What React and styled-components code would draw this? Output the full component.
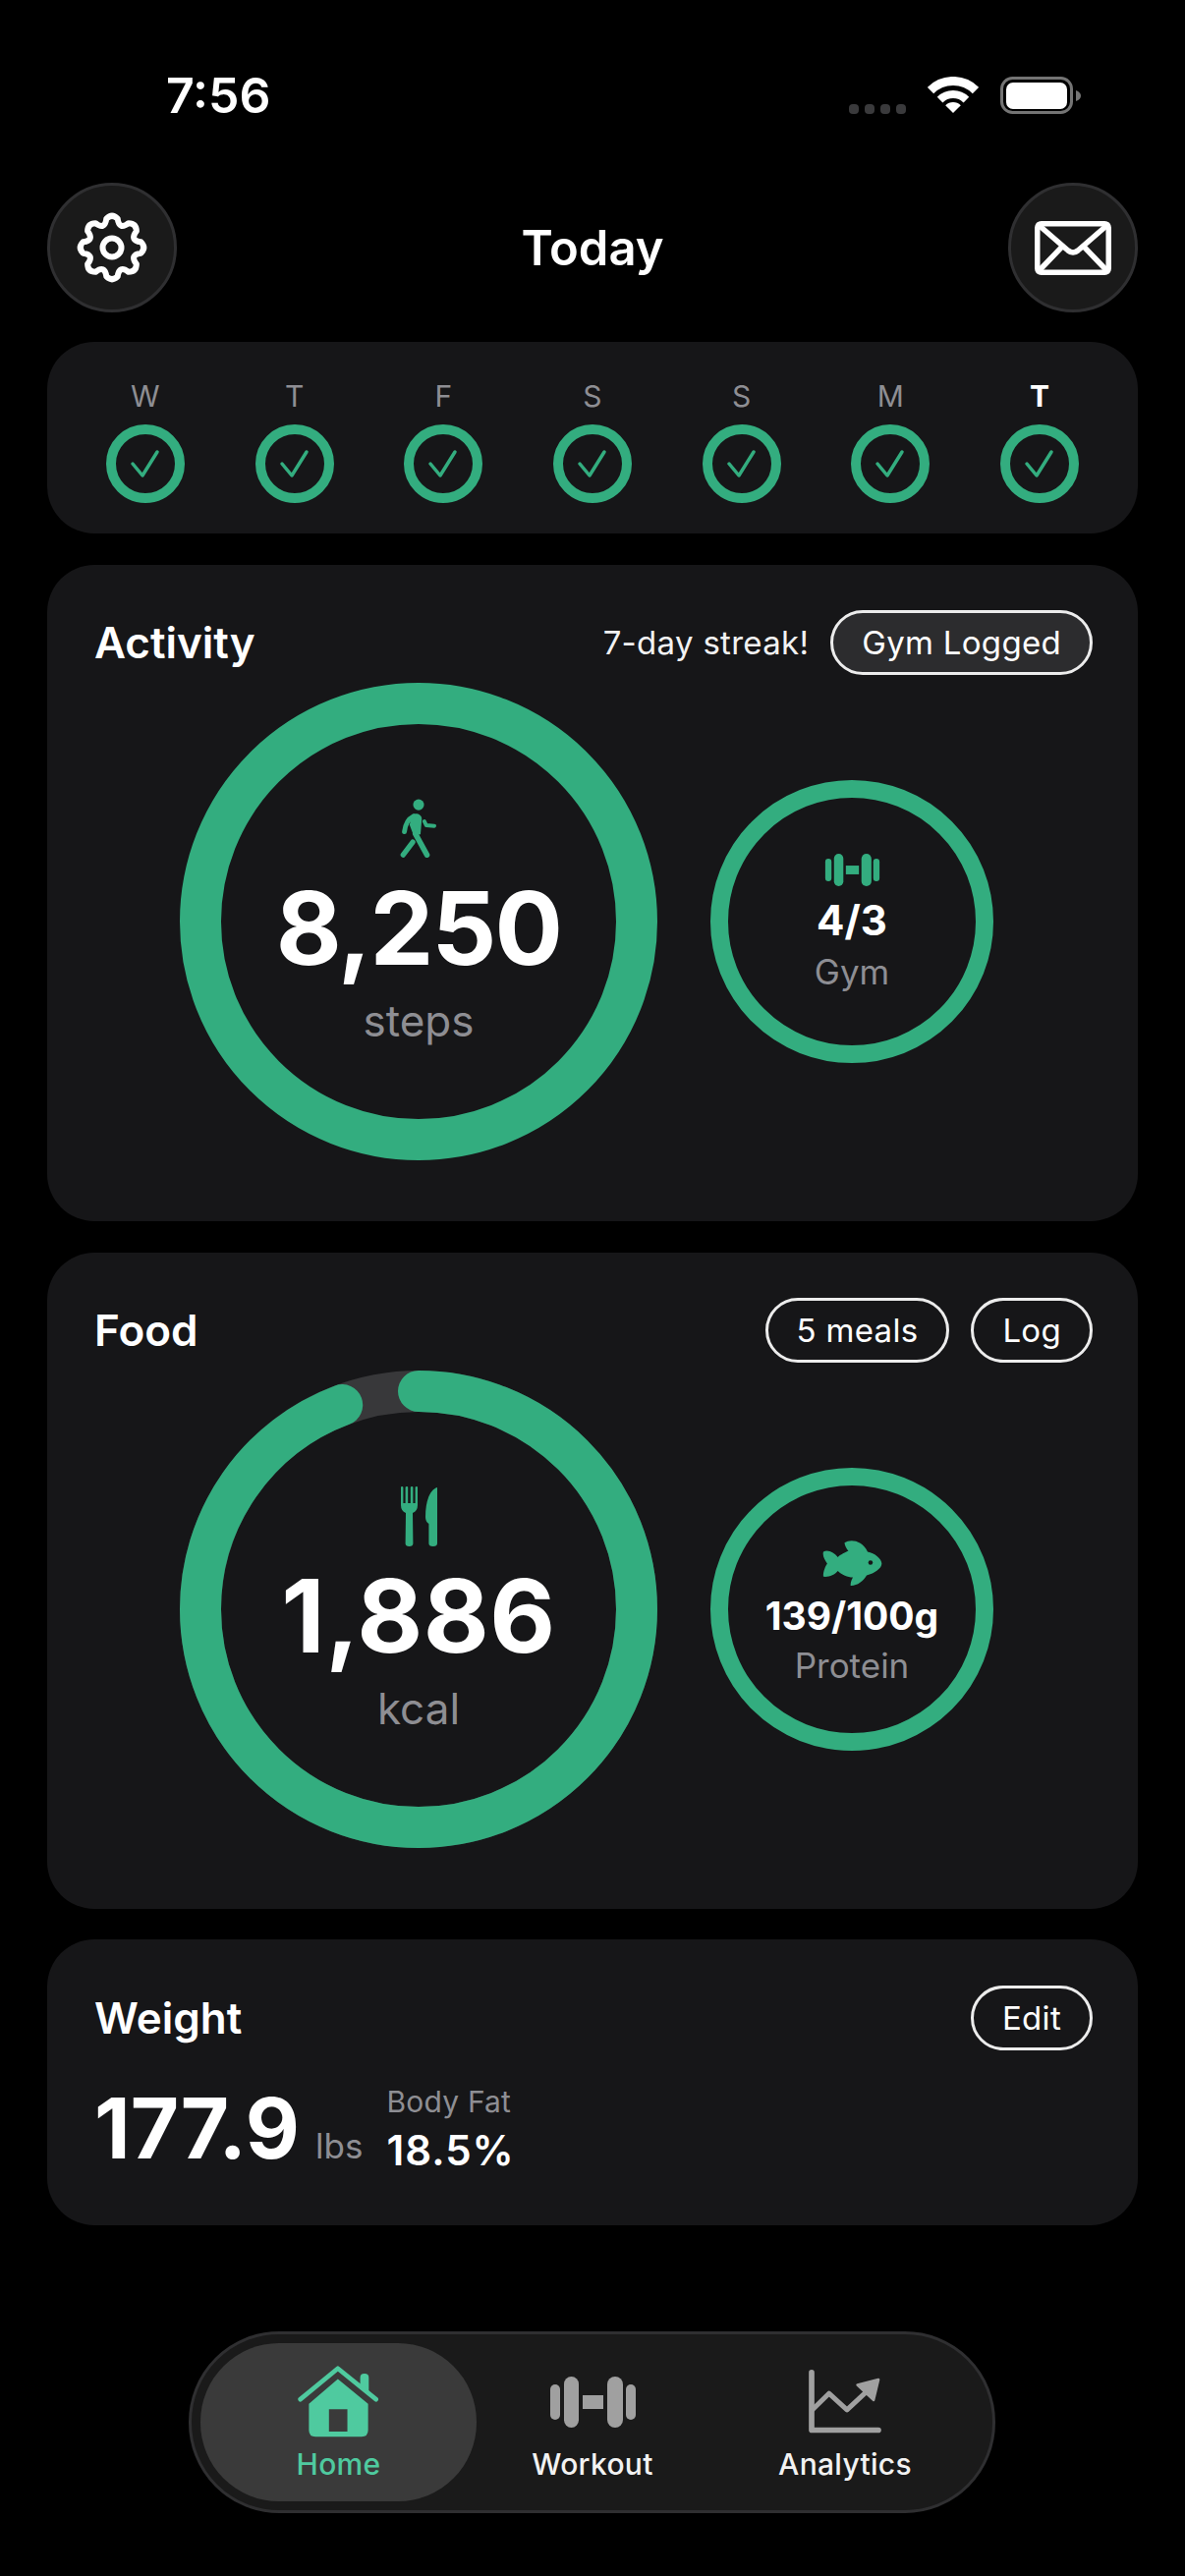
import React from 'react';
import styled, { createGlobalStyle } from 'styled-components';

const GREEN = '#33ad7f';
const MINT = '#4fca9f';
const CARD = '#161618';
const GREY = '#8e8e93';

const days = [
  { label: 'W' },
  { label: 'T' },
  { label: 'F' },
  { label: 'S' },
  { label: 'S' },
  { label: 'M' },
  { label: 'T', today: true },
];

// 8 soft teeth, stroked
const gearPath = (() => {
  const pt = (deg, r) => {
    const a = ((deg - 90) * Math.PI) / 180;
    return `${(40 + r * Math.cos(a)).toFixed(2)} ${(40 + r * Math.sin(a)).toFixed(2)}`;
  };
  let d = `M${pt(-11, 30)}`;
  for (let i = 0; i < 8; i++) {
    const c = i * 45;
    d += ` Q${pt(c, 35)} ${pt(c + 11, 30)}`;
    d += ` Q${pt(c + 22.5, 19)} ${pt(c + 34, 30)}`;
  }
  return d + 'Z';
})();

const GearIcon = () => (
  <svg width="80" height="80" viewBox="0 0 80 80" fill="none" stroke="#fff" strokeWidth="6" strokeLinejoin="round">
    <path d={gearPath} />
    <circle cx="40" cy="40" r="9.5" />
  </svg>
);

const MailIcon = () => (
  <svg width="78" height="55" viewBox="0 0 78 55" fill="none" stroke="#fff" strokeWidth="5.5" strokeLinecap="round" strokeLinejoin="round">
    <rect x="2.75" y="2.75" width="72.5" height="49.5" rx="4" />
    <path d="M4 4 L34 30 Q39 34 44 30 L74 4" />
    <path d="M4 51 L28 26 M74 51 L50 26" />
  </svg>
);

const WifiIcon = () => (
  <svg width="52" height="38" viewBox="-26 -37 52 38" fill="none" stroke="#fff">
    <path d="M-23 -23 A32.5 32.5 0 0 1 23 -23" strokeWidth="9" />
    <path d="M-13.4 -13.4 A19 19 0 0 1 13.4 -13.4" strokeWidth="8" />
    <path d="M0 0 L-7.8 -7.8 A11 11 0 0 1 7.8 -7.8 Z" fill="#fff" stroke="none" />
  </svg>
);

const BatteryIcon = () => (
  <svg width="82" height="38" viewBox="0 0 82 38" fill="none">
    <rect x="1.5" y="1.5" width="71" height="35" rx="11" stroke="#747474" strokeWidth="3" />
    <rect x="6" y="6" width="62" height="27" rx="7" fill="#fff" />
    <path d="M77 14 Q82 16 82 19.5 Q82 23 77 25 Z" fill="#747474" />
  </svg>
);

const WalkIcon = () => (
  <svg width="38" height="60" viewBox="108 38 116 182" fill={GREEN} stroke={GREEN} strokeLinecap="round" strokeLinejoin="round">
    <circle cx="166" cy="56" r="17" stroke="none" />
    <path d="M146 86 C160 80 176 86 176 100 L172 148 L150 150 L138 118 Z" stroke="none" />
    <path d="M150 92 C134 100 125 112 122 140" fill="none" strokeWidth="15" />
    <path d="M156 146 L192 212" fill="none" strokeWidth="17" />
    <path d="M148 172 L118 212" fill="none" strokeWidth="16" />
    <path d="M184 108 L190 120 L215 122" fill="none" strokeWidth="12" />
  </svg>
);

const Dumbbell = ({ width, height, color }) => (
  <svg width={width} height={height} viewBox="0 0 87 52" fill={color}>
    <rect x="0" y="8" width="10" height="36" rx="5" />
    <rect x="14" y="0" width="15" height="52" rx="7.5" />
    <rect x="33" y="19" width="21" height="14" />
    <rect x="58" y="0" width="16" height="52" rx="8" />
    <rect x="77" y="8" width="10" height="36" rx="5" />
  </svg>
);

const CutleryIcon = () => (
  <svg width="37" height="61" viewBox="0 0 37 61" fill={GREEN}>
    <path d="M0 1 Q0 0 1 0 Q2.4 0 2.4 1 V17 H4.6 V1 Q4.6 0 6 0 Q7.4 0 7.2 1 V17 H9.8 V1 Q9.8 0 11.2 0 Q12.4 0 12.4 1 V17 H14.6 V1 Q14.6 0 16 0 Q17 0 17 1 V19 Q17 25 12 27 L12.4 58 Q12.4 61 8.5 61 Q4.6 61 4.6 58 L5 27 Q0 25 0 19 Z" />
    <path d="M37 1 C30 3 25 14 25 31 Q25 36 28.4 38 L28.4 58 Q28.4 61 32.7 61 Q37 61 37 58 Z" />
  </svg>
);

const FishIcon = () => (
  <svg width="61" height="48" viewBox="167 80 187 147">
    <path
      fill={GREEN}
      d="M170 118 C185 110 205 122 215 135 C222 128 240 118 248 116 C242 108 236 98 236 90 C255 78 290 82 308 118 C330 122 352 140 352 155 C352 170 330 185 305 192 C295 210 275 225 255 224 C254 215 258 205 262 198 C245 198 228 190 215 178 C205 190 188 198 170 196 C168 185 175 165 182 155 C175 145 166 130 170 118 Z"
    />
    <circle cx="317" cy="152" r="7" fill={CARD} />
  </svg>
);

const HomeIcon = () => (
  <svg width="83" height="73" viewBox="68 56 248 218" fill={MINT}>
    <path d="M258 92 Q258 80 270 80 H272 Q284 80 284 92 V134 L258 114 Z" />
    <path d="M76 158 L190 64 L306 158" fill="none" stroke={MINT} strokeWidth="14" strokeLinecap="round" strokeLinejoin="round" />
    <path
      fillRule="evenodd"
      d="M102 172 L190 96 L282 172 V252 Q282 272 262 272 H122 Q102 272 102 252 Z M163 188 V256 H219 V188 Z"
    />
  </svg>
);

const ChartIcon = () => (
  <svg width="74" height="65" viewBox="855 68 222 194" fill="none" stroke="#a0a0a0" strokeLinecap="round" strokeLinejoin="round">
    <path d="M864 76 V252 H1068" strokeWidth="17" />
    <path d="M868 188 L917 140 L972 190 L1030 136" strokeWidth="15" />
    <path d="M1004 114 L1068 98 L1053 160 Z" fill="#a0a0a0" strokeWidth="8" />
  </svg>
);

const CheckCircle = () => (
  <svg width="80" height="80" viewBox="0 0 80 80" fill="none" stroke={GREEN}>
    <circle cx="40" cy="40" r="35" strokeWidth="10" />
    <path d="M27 40 L37 52 L52 28" strokeWidth="3.5" strokeLinecap="round" strokeLinejoin="round" />
  </svg>
);

const RingArc = ({ size, stroke, progress }) => {
  const r = (size - stroke) / 2;
  const c = size / 2;
  return (
    <RingSvg width={size} height={size} viewBox={`0 0 ${size} ${size}`} fill="none">
      {progress < 1 && <circle cx={c} cy={c} r={r} stroke="#38383a" strokeWidth={stroke} />}
      <circle
        cx={c}
        cy={c}
        r={r}
        stroke={GREEN}
        strokeWidth={stroke}
        pathLength="100"
        strokeDasharray={`${progress * 100} 100`}
        strokeLinecap={progress < 1 ? 'round' : 'butt'}
        transform={`rotate(-90 ${c} ${c})`}
      />
    </RingSvg>
  );
};

export default function App() {
  return (
    <Page>
      <GlobalStyle />
      <StatusBar>
        <Time>7:56</Time>
        <StatusIcons>
          <Signal>
            <i /><i /><i /><i />
          </Signal>
          <WifiIcon />
          <BatteryIcon />
        </StatusIcons>
      </StatusBar>

      <Header>
        <RoundButton><GearIcon /></RoundButton>
        <PageTitle>Today</PageTitle>
        <RoundButton><MailIcon /></RoundButton>
      </Header>

      <Stack>
        <WeekCard>
          {days.map((d, i) => (
            <Day key={i}>
              <DayLabel $today={d.today}>{d.label}</DayLabel>
              <CheckCircle />
            </Day>
          ))}
        </WeekCard>

        <Card>
          <CardHeader>
            <CardTitle>Activity</CardTitle>
            <Actions>
              <Streak>7-day streak!</Streak>
              <Pill $filled>Gym Logged</Pill>
            </Actions>
          </CardHeader>
          <Rings>
            <BigRing>
              <RingArc size={486} stroke={42} progress={1} />
              <BigIconSlot><WalkIcon /></BigIconSlot>
              <BigValue $spacing={-1.8}>8,250</BigValue>
              <BigUnit>steps</BigUnit>
            </BigRing>
            <SmallRing>
              <RingArc size={288} stroke={18} progress={1} />
              <SmallIconSlot><Dumbbell width={57} height={33} color={GREEN} /></SmallIconSlot>
              <SmallValue>4/3</SmallValue>
              <SmallUnit>Gym</SmallUnit>
            </SmallRing>
          </Rings>
        </Card>

        <Card>
          <CardHeader>
            <CardTitle>Food</CardTitle>
            <Actions>
              <Pill>5 meals</Pill>
              <Pill>Log</Pill>
            </Actions>
          </CardHeader>
          <Rings>
            <BigRing>
              <RingArc size={486} stroke={42} progress={0.943} />
              <BigIconSlot><CutleryIcon /></BigIconSlot>
              <BigValue $spacing={0.5}>1,886</BigValue>
              <BigUnit>kcal</BigUnit>
            </BigRing>
            <SmallRing>
              <RingArc size={288} stroke={18} progress={1} />
              <FishSlot><FishIcon /></FishSlot>
              <ProteinValue>139/100g</ProteinValue>
              <SmallUnit>Protein</SmallUnit>
            </SmallRing>
          </Rings>
        </Card>

        <WeightCard>
          <CardHeader>
            <CardTitle>Weight</CardTitle>
            <Pill>Edit</Pill>
          </CardHeader>
          <WeightRow>
            <WeightMain>
              <WeightValue>177.9</WeightValue>
              <WeightUnit>lbs</WeightUnit>
            </WeightMain>
            <FatColumn>
              <FatLabel>Body Fat</FatLabel>
              <FatValue>18.5%</FatValue>
            </FatColumn>
          </WeightRow>
        </WeightCard>
      </Stack>

      <TabBar>
        <Tab $width={281} $active>
          <TabIcon><HomeIcon /></TabIcon>
          <TabLabel $active>Home</TabLabel>
        </Tab>
        <Tab $width={236}>
          <TabIcon><Dumbbell width={87} height={52} color="#a0a0a0" /></TabIcon>
          <TabLabel>Workout</TabLabel>
        </Tab>
        <Tab $width={278}>
          <TabIcon><ChartIcon /></TabIcon>
          <TabLabel>Analytics</TabLabel>
        </Tab>
      </TabBar>
    </Page>
  );
}

const GlobalStyle = createGlobalStyle`
  html, body {
    margin: 0;
    padding: 0;
    background: #000;
  }
  * {
    box-sizing: border-box;
  }
`;

const Page = styled.div`
  width: 1206px;
  height: 2622px;
  background: #000;
  color: #fff;
  font-family: Inter, "Liberation Sans", sans-serif;
  padding: 0 48px;
  overflow: hidden;
`;

const StatusBar = styled.div`
  height: 186px;
  padding: 72px 58px 0 121px;
  display: flex;
  justify-content: space-between;
  align-items: flex-start;
`;

const Time = styled.div`
  font-size: 50px;
  line-height: 1;
  font-weight: 600;
`;

const StatusIcons = styled.div`
  margin-top: 6px;
  display: flex;
  align-items: flex-start;
  gap: 22px;
`;

const Signal = styled.div`
  display: flex;
  gap: 6px;
  margin-top: 28px;

  i {
    width: 10px;
    height: 10px;
    border-radius: 4px;
    background: #3a3a3c;
  }
`;

const Header = styled.div`
  height: 132px;
  display: flex;
  justify-content: space-between;
  align-items: center;
`;

const RoundButton = styled.div`
  width: 132px;
  height: 132px;
  border-radius: 50%;
  background: #1a1a1a;
  border: 3px solid #2f2f31;
  display: flex;
  align-items: center;
  justify-content: center;
`;

const PageTitle = styled.div`
  font-size: 49px;
  line-height: 1;
  font-weight: 600;
`;

const Stack = styled.div`
  margin-top: 30px;
  display: flex;
  flex-direction: column;
  gap: 32px;
`;

const WeekCard = styled.div`
  height: 195px;
  background: ${CARD};
  border-radius: 48px;
  padding: 38px 24px 0;
  display: grid;
  grid-template-columns: repeat(7, 1fr);
`;

const Day = styled.div`
  display: flex;
  flex-direction: column;
  align-items: center;
  gap: 12px;
`;

const DayLabel = styled.div`
  font-size: 30px;
  line-height: 34px;
  font-weight: ${(p) => (p.$today ? 700 : 400)};
  color: ${(p) => (p.$today ? '#fff' : GREY)};
`;

const Card = styled.div`
  height: 668px;
  background: ${CARD};
  border-radius: 48px;
  padding: 46px 46px 0 48px;
`;

const WeightCard = styled(Card)`
  height: 291px;
  margin-top: -1px;
  padding-top: 47px;
`;

const CardHeader = styled.div`
  height: 66px;
  display: flex;
  justify-content: space-between;
  align-items: center;
`;

const CardTitle = styled.div`
  font-size: 44px;
  line-height: 1;
  font-weight: 600;
`;

const Actions = styled.div`
  display: flex;
  align-items: center;
  gap: 22px;
`;

const Streak = styled.div`
  font-size: 33px;
  line-height: 1;
  font-weight: 400;
  letter-spacing: 0.3px;
  color: #f2f2f2;
`;

const Pill = styled.div`
  height: 66px;
  padding: 0 29px;
  border-radius: 33px;
  border: 3px solid #ececec;
  background: ${(p) => (p.$filled ? '#2c2c2e' : 'transparent')};
  display: flex;
  align-items: center;
  font-size: 33px;
  font-weight: 400;
  letter-spacing: 0.3px;
`;

const Rings = styled.div`
  margin-top: 8px;
  padding-left: 87px;
  display: flex;
  align-items: center;
  gap: 54px;
`;

const BigRing = styled.div`
  position: relative;
  width: 486px;
  height: 486px;
  display: flex;
  flex-direction: column;
  align-items: center;
`;

const SmallRing = styled.div`
  position: relative;
  width: 288px;
  height: 288px;
  display: flex;
  flex-direction: column;
  align-items: center;
`;

const RingSvg = styled.svg`
  position: absolute;
  left: 0;
  top: 0;
`;

const BigIconSlot = styled.div`
  height: 61px;
  margin-top: 118px;
  display: flex;
  position: relative;
`;

const SmallIconSlot = styled.div`
  height: 33px;
  margin-top: 75px;
  display: flex;
  position: relative;
`;

const FishSlot = styled.div`
  height: 48px;
  margin-top: 73px;
  display: flex;
  position: relative;
`;

const BigValue = styled.div`
  position: relative;
  margin-top: 19px;
  font-size: 103px;
  line-height: 1;
  font-weight: 700;
  letter-spacing: ${(p) => p.$spacing}px;
`;

const BigUnit = styled.div`
  position: relative;
  margin-top: 21px;
  font-size: 44px;
  line-height: 1;
  color: ${GREY};
`;

const SmallValue = styled.div`
  position: relative;
  margin-top: 14px;
  font-size: 42px;
  line-height: 1;
  font-weight: 700;
`;

const ProteinValue = styled.div`
  position: relative;
  margin-top: 10px;
  font-size: 39px;
  line-height: 1;
  font-weight: 700;
`;

const SmallUnit = styled.div`
  position: relative;
  margin-top: 14px;
  font-size: 35px;
  line-height: 1;
  color: ${GREY};
`;

const WeightRow = styled.div`
  margin-top: 37px;
  display: flex;
  align-items: flex-start;
  gap: 24px;
`;

const WeightMain = styled.div`
  display: flex;
  align-items: baseline;
  gap: 16px;
`;

const WeightValue = styled.div`
  font-size: 85px;
  line-height: 1;
  font-weight: 700;
`;

const WeightUnit = styled.div`
  font-size: 35px;
  line-height: 1;
  color: ${GREY};
`;

const FatColumn = styled.div`
  display: flex;
  flex-direction: column;
  gap: 14px;
`;

const FatLabel = styled.div`
  font-size: 30px;
  line-height: 1;
  letter-spacing: 0.2px;
  color: ${GREY};
`;

const FatValue = styled.div`
  font-size: 42px;
  line-height: 1;
  font-weight: 600;
  letter-spacing: 1px;
`;

const TabBar = styled.div`
  width: 821px;
  height: 185px;
  margin: 108px 0 0 144px;
  padding: 0 9px;
  border-radius: 92px;
  background: #1a1a1a;
  border: 3px solid #2f2f31;
  display: flex;
  align-items: center;
`;

const Tab = styled.div`
  width: ${(p) => p.$width}px;
  height: 161px;
  border-radius: 80px;
  background: ${(p) => (p.$active ? '#3a3a3a' : 'transparent')};
  padding-top: 23px;
  display: flex;
  flex-direction: column;
  align-items: center;
`;

const TabIcon = styled.div`
  height: 73px;
  display: flex;
  align-items: center;
`;

const TabLabel = styled.div`
  margin-top: 12px;
  font-size: 30px;
  line-height: 1;
  font-weight: 500;
  letter-spacing: 0.3px;
  color: ${(p) => (p.$active ? MINT : '#f2f2f2')};
`;
